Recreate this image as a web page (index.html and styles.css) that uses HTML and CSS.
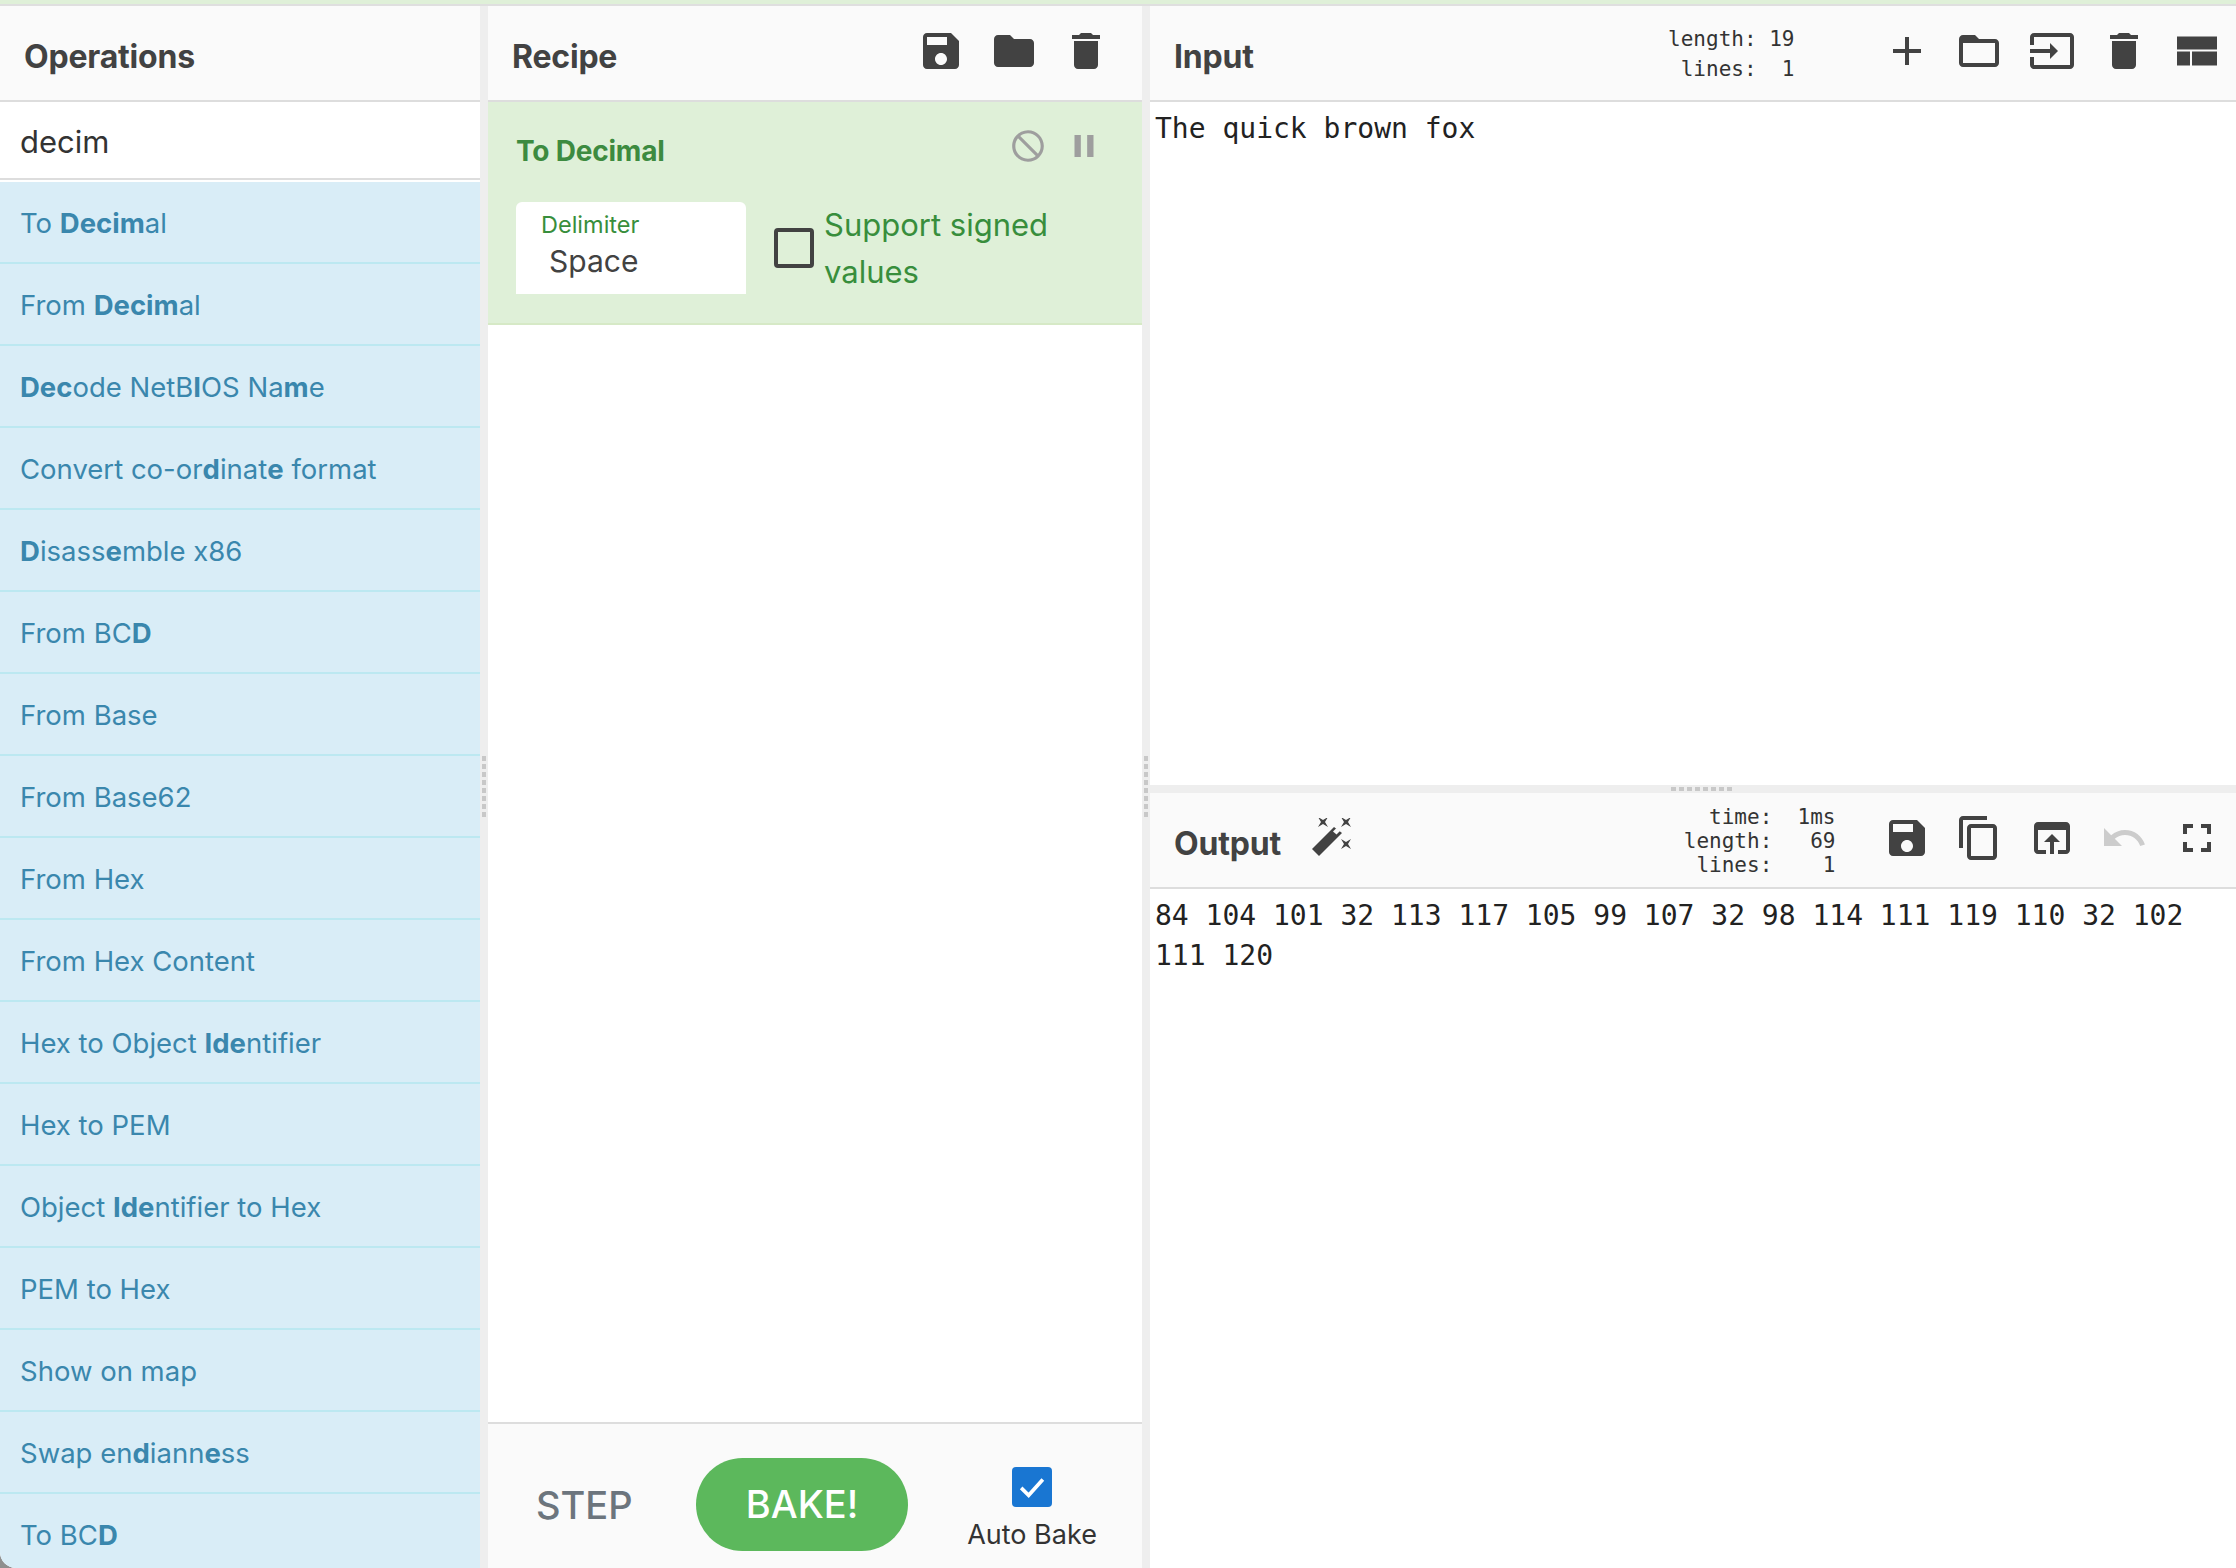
FILE: index.html
```html
<!DOCTYPE html>
<html lang="en">
<head>
    <meta charset="UTF-8">
    <meta name="viewport" content="width=device-width, initial-scale=1.0">
    <title>CyberChef</title>
    <link rel="stylesheet" href="styles.css">
</head>
<body>
    <div class="app">
        <div class="top-strip"></div>
        <div class="columns">

            <!-- Operations -->
            <div class="col col-ops">
                <div class="head"><span class="title">Operations</span></div>
                <input class="search" type="text" value="decim">
                <ul class="op-list">
                    <li>To <b>Decim</b>al</li>
                    <li>From <b>Decim</b>al</li>
                    <li><b>Dec</b>ode NetB<b>I</b>OS Na<b>m</b>e</li>
                    <li>Convert co-or<b>d</b>inat<b>e</b> format</li>
                    <li><b>D</b>isass<b>e</b>mble x86</li>
                    <li>From BC<b>D</b></li>
                    <li>From Base</li>
                    <li>From Base62</li>
                    <li>From Hex</li>
                    <li>From Hex Content</li>
                    <li>Hex to Object <b>Ide</b>ntifier</li>
                    <li>Hex to PEM</li>
                    <li>Object <b>Ide</b>ntifier to Hex</li>
                    <li>PEM to Hex</li>
                    <li>Show on map</li>
                    <li>Swap en<b>d</b>iann<b>e</b>ss</li>
                    <li>To BC<b>D</b></li>
                </ul>
            </div>

            <div class="gutter"><span class="grip"></span></div>

            <!-- Recipe -->
            <div class="col col-recipe">
                <div class="head">
                    <span class="title">Recipe</span>
                    <div class="icons recipe-icons">
                        <svg class="icon" viewBox="0 0 24 24"><path d="M17 3H5c-1.11 0-2 .9-2 2v14c0 1.1.89 2 2 2h14c1.1 0 2-.9 2-2V7l-4-4zm-5 16c-1.66 0-3-1.34-3-3s1.34-3 3-3 3 1.34 3 3-1.34 3-3 3zm3-10H5V5h10v4z"/></svg>
                        <svg class="icon" viewBox="0 0 24 24"><path d="M10 4H4c-1.1 0-1.99.9-1.99 2L2 18c0 1.1.9 2 2 2h16c1.1 0 2-.9 2-2V8c0-1.1-.9-2-2-2h-8l-2-2z"/></svg>
                        <svg class="icon" viewBox="0 0 24 24"><path d="M6 19c0 1.1.9 2 2 2h8c1.1 0 2-.9 2-2V7H6v12zM19 4h-3.5l-1-1h-5l-1 1H5v2h14V4z"/></svg>
                    </div>
                </div>
                <div class="recipe-list">
                    <div class="op">
                        <div class="op-head">
                            <span class="op-title">To Decimal</span>
                            <div class="op-icons">
                                <svg class="op-icon" viewBox="0 0 24 24"><path d="M12 2C6.48 2 2 6.48 2 12s4.48 10 10 10 10-4.48 10-10S17.52 2 12 2zm0 18c-4.42 0-8-3.58-8-8 0-1.85.63-3.55 1.69-4.9L16.9 18.31C15.55 19.37 13.85 20 12 20zm6.31-3.1L7.1 5.69C8.45 4.63 10.15 4 12 4c4.42 0 8 3.58 8 8 0 1.85-.63 3.55-1.69 4.9z"/></svg>
                                <svg class="op-icon" viewBox="0 0 24 24"><path d="M6 19h4V5H6v14zm8-14v14h4V5h-4z"/></svg>
                            </div>
                        </div>
                        <div class="op-args">
                            <div class="field">
                                <span class="field-label">Delimiter</span>
                                <span class="field-value">Space</span>
                            </div>
                            <span class="box"></span>
                            <span class="box-label">Support signed values</span>
                        </div>
                    </div>
                </div>
                <div class="controls">
                    <span class="step">STEP</span>
                    <span class="bake">BAKE!</span>
                    <div class="auto">
                        <span class="box-on">
                            <svg viewBox="0 0 24 24"><path d="M5.5 12.5l4.5 4.5 8.5-9.5" fill="none" stroke="#fff" stroke-width="2.2"/></svg>
                        </span>
                        <span class="auto-label">Auto Bake</span>
                    </div>
                </div>
            </div>

            <div class="gutter"><span class="grip"></span></div>

            <!-- Input / output -->
            <div class="col col-io">
                <div class="pane pane-input">
                    <div class="head">
                        <span class="title">Input</span>
                        <pre class="stats stats-input">length: 19
 lines:  1</pre>
                        <div class="icons">
                            <svg class="icon" viewBox="0 0 24 24"><path d="M19 13h-6v6h-2v-6H5v-2h6V5h2v6h6v2z"/></svg>
                            <svg class="icon" viewBox="0 0 24 24"><path d="M20 6h-8l-2-2H4c-1.1 0-1.99.9-1.99 2L2 18c0 1.1.9 2 2 2h16c1.1 0 2-.9 2-2V8c0-1.1-.9-2-2-2zm0 12H4V8h16v10z"/></svg>
                            <svg class="icon" viewBox="0 0 24 24"><path d="M21 3.01H3c-1.1 0-2 .9-2 2V9h2V4.99h18v14.03H3V15H1v4.01c0 1.1.9 1.98 2 1.98h18c1.1 0 2-.88 2-1.98v-14c0-1.11-.9-2-2-2zM11 16l4-4-4-4v3H1v2h10v3z"/></svg>
                            <svg class="icon" viewBox="0 0 24 24"><path d="M6 19c0 1.1.9 2 2 2h8c1.1 0 2-.9 2-2V7H6v12zM19 4h-3.5l-1-1h-5l-1 1H5v2h14V4z"/></svg>
                            <svg class="icon" viewBox="0 0 24 24"><path d="M2 4.75h20v6.5H2zM2 12.25h6.5v7H2zM9.5 12.25H22v7H9.5z"/></svg>
                        </div>
                    </div>
                    <div class="text-area">The quick brown fox</div>
                </div>

                <div class="gutter-h"><span class="grip-h"></span></div>

                <div class="pane pane-output">
                    <div class="head">
                        <span class="title">Output</span>
                        <svg class="wand" viewBox="0 0 40 40">
                            <path d="M6 0l5 3 5-3-3 5 3 5-5-3-5 3 3-5z" transform="translate(0 -1)"/>
                            <path d="M6 0l5 3 5-3-3 5 3 5-5-3-5 3 3-5z" transform="translate(23 -1)"/>
                            <path d="M6 0l5 3 5-3-3 5 3 5-5-3-5 3 3-5z" transform="translate(23 21)"/>
                            <path d="M0 31L22 9l8 6L7 38z"/>
                            <path d="M21 13.5l3.5-3.5 3.5 3-3.5 3.5z" fill="#fafafa"/>
                        </svg>
                        <pre class="stats stats-output">  time:  1ms
length:   69
 lines:    1</pre>
                        <div class="icons">
                            <svg class="icon" viewBox="0 0 24 24"><path d="M17 3H5c-1.11 0-2 .9-2 2v14c0 1.1.89 2 2 2h14c1.1 0 2-.9 2-2V7l-4-4zm-5 16c-1.66 0-3-1.34-3-3s1.34-3 3-3 3 1.34 3 3-1.34 3-3 3zm3-10H5V5h10v4z"/></svg>
                            <svg class="icon" viewBox="0 0 24 24"><path d="M16 1H4c-1.1 0-2 .9-2 2v14h2V3h12V1zm3 4H8c-1.1 0-2 .9-2 2v14c0 1.1.9 2 2 2h11c1.1 0 2-.9 2-2V7c0-1.1-.9-2-2-2zm0 16H8V7h11v14z"/></svg>
                            <svg class="icon" viewBox="0 0 24 24"><path d="M19 4H5c-1.11 0-2 .9-2 2v12c0 1.1.89 2 2 2h4v-2H5V8h14v10h-4v2h4c1.1 0 2-.9 2-2V6c0-1.1-.89-2-2-2zm-7 6l-4 4h3v6h2v-6h3l-4-4z"/></svg>
                            <svg class="icon icon-off" viewBox="0 0 24 24"><path d="M12.5 8c-2.65 0-5.05.99-6.9 2.6L2 7v9h9l-3.62-3.62c1.39-1.16 3.16-1.88 5.12-1.88 3.54 0 6.55 2.31 7.6 5.5l2.37-.78C21.08 11.03 17.15 8 12.5 8z"/></svg>
                            <svg class="icon" viewBox="0 0 24 24"><path d="M7 14H5v5h5v-2H7v-3zm-2-4h2V7h3V5H5v5zm12 7h-3v2h5v-5h-2v3zM14 5v2h3v3h2V5h-5z"/></svg>
                        </div>
                    </div>
                    <div class="text-area">84 104 101 32 113 117 105 99 107 32 98 114 111 119 110 32 102 111 120</div>
                </div>
            </div>
        </div>
    </div>
</body>
</html>
```

FILE: styles.css
```css
html {
    background: #8f8f8f;
}
body {
    margin: 0;
    font-family: Inter, "Noto Sans", sans-serif;
    color: #424242;
}
.app {
    height: 100vh;
    display: flex;
    flex-direction: column;
    overflow: hidden;
    background: #fff;
    border-bottom-left-radius: 16px;
}
.top-strip {
    height: 4px;
    flex: none;
    background: #dff0d8;
    border-bottom: 2px solid #dfdfdf;
}
.columns {
    flex: 1;
    min-height: 0;
    display: flex;
}
.col {
    display: flex;
    flex-direction: column;
    min-height: 0;
}
.col-ops {
    width: 480px;
}
.col-recipe {
    width: 654px;
}
.col-io {
    flex: 1;
    min-width: 0;
}
.gutter {
    width: 8px;
    flex: none;
    background: #eee;
    display: flex;
    align-items: center;
    justify-content: center;
}
.grip {
    width: 4px;
    height: 62px;
    background: repeating-linear-gradient(to bottom, #c8c8c8 0, #c8c8c8 5px, transparent 5px, transparent 8px);
}
.gutter-h {
    height: 8px;
    flex: none;
    background: #eee;
    display: flex;
    justify-content: center;
}
.grip-h {
    width: 62px;
    height: 4px;
    margin: 2px 0 0 18px;
    background: repeating-linear-gradient(to right, #c8c8c8 0, #c8c8c8 5px, transparent 5px, transparent 8px);
}

/* panel headers */
.head {
    height: 94px;
    flex: none;
    display: flex;
    align-items: center;
    padding-left: 24px;
    background: #fafafa;
    border-bottom: 2px solid #ddd;
}
.title {
    font-size: 32px;
    font-weight: 700;
    letter-spacing: -0.2px;
    color: #424242;
    margin-top: 6px;
}
.icons {
    margin-left: auto;
    margin-right: 15.5px;
    margin-bottom: 5px;
    display: flex;
    gap: 24.5px;
}
.recipe-icons {
    margin-right: 32px;
}
.icon {
    width: 48px;
    height: 48px;
    fill: #424242;
    display: block;
}
.icon-off {
    fill: #ccc;
}
.wand {
    width: 40px;
    height: 40px;
    margin: 0 0 4px 31px;
    fill: #424242;
}
.stats {
    margin: 2px 0 0 auto;
    font-family: "DejaVu Sans Mono", monospace;
    font-size: 21px;
    color: #333;
}
.stats-input {
    line-height: 30px;
    margin-right: 88px;
}
.stats-output {
    line-height: 24px;
    margin-right: 47px;
}
.stats + .icons {
    margin-left: 0;
}

/* operations list */
.search {
    display: block;
    flex: none;
    height: 74px;
    width: 440px;
    padding: 2px 20px 0;
    border: 0;
    outline: 0;
    border-bottom: 2px solid #ddd;
    margin-bottom: 2px;
    font-family: inherit;
    font-size: 31px;
    color: #333;
    background: #fff;
}
.op-list {
    list-style: none;
    margin: 0;
    padding: 0;
    flex: 1;
    min-height: 0;
    overflow: hidden;
    background: #d9edf7;
}
.op-list li {
    height: 80px;
    line-height: 83px;
    padding-left: 20px;
    font-size: 27.5px;
    color: #3a87ad;
    border-bottom: 2px solid #bce8f1;
}
.op-list b {
    font-weight: 700;
}

/* recipe */
.recipe-list {
    flex: 1;
    min-height: 0;
    background: #fff;
}
.op {
    box-sizing: border-box;
    height: 223px;
    padding: 21px 39px 29px 28px;
    background: #dff0d8;
    border-bottom: 2px solid #d6e9c6;
}
.op-head {
    display: flex;
    align-items: center;
    justify-content: space-between;
}
.op-title {
    font-size: 28px;
    font-weight: 700;
    letter-spacing: -0.2px;
    color: #3d8b40;
    margin-top: 11px;
}
.op-icons {
    display: flex;
    gap: 18px;
}
.op-icon {
    width: 38px;
    height: 38px;
    display: block;
    fill: #9e9e9e;
}
.op-args {
    display: flex;
    align-items: center;
    margin-top: 33px;
}
.field {
    width: 230px;
    height: 92px;
    flex: none;
    box-sizing: border-box;
    padding: 8px 25px 0;
    background: #fff;
    border-radius: 6px 6px 0 0;
    display: flex;
    flex-direction: column;
}
.field-label {
    font-size: 23.5px;
    line-height: 30px;
    color: #388e3c;
}
.field-value {
    font-size: 30px;
    line-height: 42px;
    margin-left: 8px;
    color: #424242;
}
.box {
    width: 40px;
    height: 40px;
    flex: none;
    box-sizing: border-box;
    margin: 0 10px 0 28px;
    border: 4px solid #424242;
    border-radius: 4px;
}
.box-label {
    font-size: 31px;
    line-height: 47px;
    color: #388e3c;
}

/* bake controls */
.controls {
    box-sizing: border-box;
    height: 146px;
    flex: none;
    padding: 35px 0 18px 48px;
    display: flex;
    align-items: center;
    background: #fafafa;
    border-top: 2px solid #ddd;
}
.step {
    width: 96px;
    font-size: 38px;
    font-weight: 500;
    color: #6c757d;
    margin-right: 64px;
}
.bake {
    width: 212px;
    height: 93px;
    line-height: 93px;
    text-align: center;
    font-size: 38px;
    font-weight: 500;
    color: #fff;
    background: #5cb85c;
    border-radius: 47px;
    margin-right: 60px;
}
.auto {
    width: 128px;
    display: flex;
    flex-direction: column;
    align-items: center;
    gap: 12px;
    margin-top: 8px;
}
.box-on {
    width: 40px;
    height: 40px;
    display: block;
    background: #1976d2;
    border-radius: 4px;
}
.box-on svg {
    display: block;
}
.auto-label {
    font-size: 27px;
    line-height: 32px;
    white-space: nowrap;
    color: #333;
}

/* input and output */
.pane {
    display: flex;
    flex-direction: column;
    min-height: 0;
}
.pane-input {
    height: 779px;
}
.pane-output {
    flex: 1;
}
.text-area {
    padding: 7px 5px;
    font-family: "DejaVu Sans Mono", monospace;
    font-size: 28px;
    line-height: 40px;
    color: #222;
    background: #fff;
}
```
